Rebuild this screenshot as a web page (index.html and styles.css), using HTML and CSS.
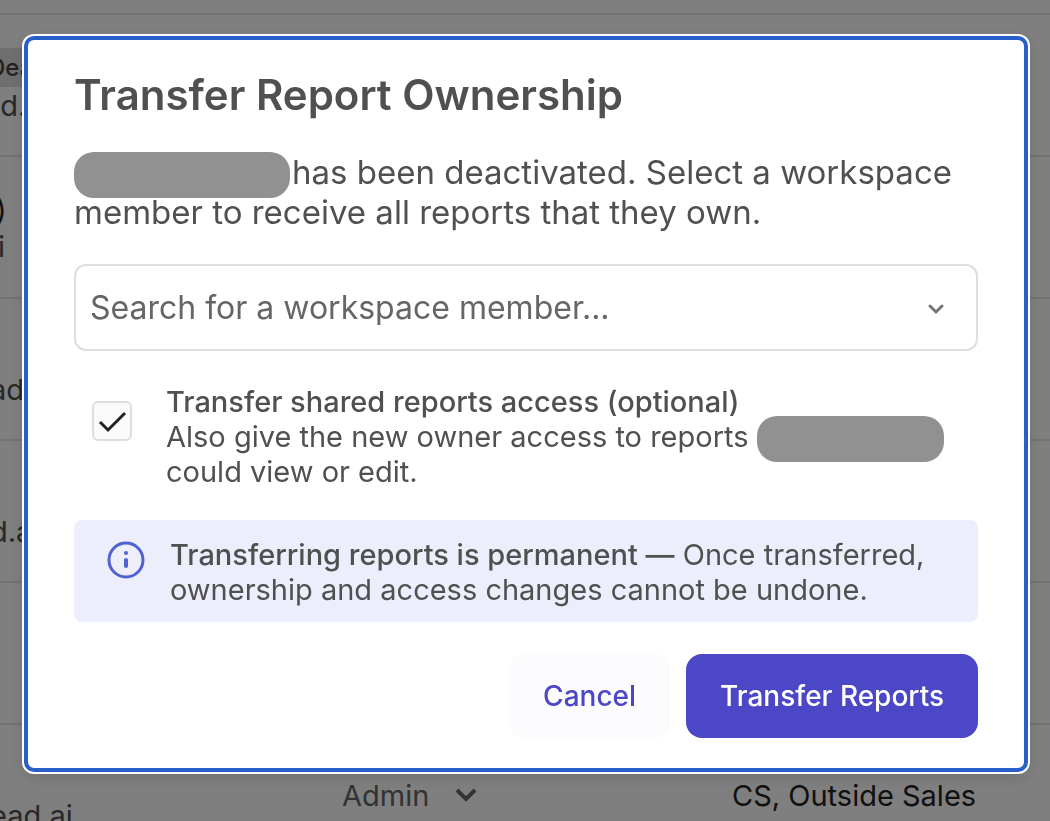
FILE: index.html
```html
<!DOCTYPE html>
<html lang="en">
<head>
    <meta charset="UTF-8">
    <meta name="viewport" content="width=device-width, initial-scale=1.0">
    <title>Transfer Report Ownership</title>
    <link rel="stylesheet" href="styles.css">
</head>
<body>
    <table class="members">
        <tbody>
            <tr class="spacer"><td colspan="3"></td></tr>
            <tr>
                <td class="member"><span class="status">Dea</span><span class="email">ad.</span></td>
                <td></td>
                <td></td>
            </tr>
            <tr>
                <td class="member"><span class="name">)</span><span class="email">i</span></td>
                <td></td>
                <td></td>
            </tr>
            <tr>
                <td class="member single"><span class="email">ad</span></td>
                <td></td>
                <td></td>
            </tr>
            <tr>
                <td class="member single"><span class="email">d.a</span></td>
                <td></td>
                <td></td>
            </tr>
            <tr>
                <td class="member"></td>
                <td></td>
                <td></td>
            </tr>
            <tr>
                <td class="member single"><span class="email">ead.ai</span></td>
                <td class="role">
                    <button class="role-btn">Admin
                        <svg width="22" height="14" viewBox="0 0 22 14" fill="none" stroke="currentColor" stroke-width="4"><path d="M2 2l9 9 9-9"/></svg>
                    </button>
                </td>
                <td class="groups">CS, Outside Sales</td>
            </tr>
        </tbody>
    </table>

    <div class="overlay">
        <div class="modal" role="dialog" aria-modal="true" aria-labelledby="modalTitle">
            <h1 id="modalTitle" class="modal-title">Transfer Report Ownership</h1>
            <p class="modal-text"><span class="redacted"></span>has been deactivated. Select a workspace member to receive all reports that they own.</p>

            <div class="select-wrap">
                <select class="member-select" aria-label="Workspace member">
                    <option>Search for a workspace member...</option>
                </select>
                <svg class="select-arrow" width="18" height="12" viewBox="0 0 18 12" fill="none" stroke="currentColor" stroke-width="3" stroke-linecap="round"><path d="M3 3l6 6 6-6"/></svg>
            </div>

            <div class="option">
                <input type="checkbox" id="shared" class="checkbox" checked>
                <label for="shared" class="option-label">
                    <strong>Transfer shared reports access (optional)</strong><br>
                    Also give the new owner access to reports <span class="redacted small"></span><br>
                    could view or edit.
                </label>
            </div>

            <div class="notice">
                <svg class="notice-icon" width="38" height="38" viewBox="0 0 38 38" fill="none" stroke="currentColor"><circle cx="19" cy="19" r="17" stroke-width="3"/><path d="M19 19v6" stroke-width="4" stroke-linecap="round"/><circle cx="19" cy="12" r="2" fill="currentColor" stroke="none"/></svg>
                <p><strong>Transferring reports is permanent —</strong> Once transferred, ownership and access changes cannot be undone.</p>
            </div>

            <div class="actions">
                <button class="btn">Cancel</button>
                <button class="btn primary">Transfer Reports</button>
            </div>
        </div>
    </div>
</body>
</html>
```
FILE: styles.css
```css
* {
    margin: 0;
    padding: 0;
    box-sizing: border-box;
}

body {
    height: 100vh;
    overflow: hidden;
    background-color: #fff;
    font-family: Inter, "Liberation Sans", sans-serif;
    font-size: 29px;
    line-height: 35px;
    color: #505050;
}

button,
select {
    font: inherit;
}

strong {
    font-weight: 500;
}

/* Members table */
.members {
    width: 100%;
    border-collapse: collapse;
    table-layout: fixed;
}

.members td {
    height: 142px;
    border-bottom: 2px solid #e6e6e6;
    white-space: nowrap;
}

.members .spacer td {
    height: 14px;
}

.members .member {
    padding-top: 2px;
}

.members .single {
    padding-top: 40px;
}

.member span {
    display: block;
    width: max-content;
    line-height: 37px;
}

.member .status {
    margin-left: -16px;
    padding: 2px 4px;
    background-color: #dedede;
    color: #444;
    font-size: 24px;
    font-weight: 500;
    line-height: 35px;
}

.member .status + .email {
    margin-left: -16px;
}

.member .name {
    margin-left: -4px;
    color: #222;
}

.member .name + .email {
    margin-left: -2px;
}

.single .email {
    margin-left: -10px;
}

.role-btn {
    display: flex;
    align-items: center;
    gap: 26px;
    margin-left: -8px;
    border: none;
    background: none;
    color: #666;
}

.groups {
    padding-left: 32px;
    color: #222;
}

/* Modal */
.overlay {
    position: fixed;
    inset: 0;
    padding: 36px 22px 0 24px;
    background-color: rgba(0, 0, 0, 0.5);
}

.modal {
    padding: 35px 46px 30px;
    border: 4px solid #285fc8;
    border-radius: 10px;
    box-shadow: 0 0 0 2px #fff, 0 4px 16px rgba(0, 0, 0, 0.15);
    background-color: #fff;
}

.modal-title {
    margin-bottom: 37px;
    font-size: 42px;
    font-weight: 600;
    line-height: 40px;
}

.modal-text {
    margin-bottom: 32px;
    font-size: 33px;
    line-height: 40px;
}

.redacted {
    display: inline-block;
    width: 216px;
    height: 46px;
    margin: -6px 2px -6px 0;
    border-radius: 20px;
    background-color: #919191;
    vertical-align: middle;
}

.redacted.small {
    width: 187px;
    margin: -8px 0;
}

.select-wrap {
    position: relative;
    margin-bottom: 33px;
}

.member-select {
    width: 100%;
    height: 87px;
    padding: 0 14px;
    border: 2px solid #dedede;
    border-radius: 12px;
    background-color: #fff;
    color: #666;
    font-size: 32px;
    appearance: none;
}

.select-arrow {
    position: absolute;
    top: 39px;
    right: 33px;
    color: #757575;
}

.option {
    display: flex;
    gap: 34px;
    padding-left: 18px;
    margin-bottom: 31px;
}

.checkbox {
    flex: none;
    width: 40px;
    height: 40px;
    margin-top: 17px;
    border: 2px solid #dedede;
    border-radius: 6px;
    background-color: #fafafa;
    appearance: none;
}

.checkbox:checked {
    background-image: url("data:image/svg+xml,%3Csvg xmlns='http://www.w3.org/2000/svg' viewBox='0 0 36 36' fill='none' stroke='%23222' stroke-width='3'%3E%3Cpath d='M6 19l8 8 17-17'/%3E%3C/svg%3E");
}

.notice {
    display: flex;
    gap: 25px;
    padding: 17px 33px 15px;
    margin-bottom: 32px;
    border-radius: 8px;
    background-color: #edeefc;
}

.notice-icon {
    flex: none;
    margin-top: 4px;
    color: #5062d2;
}

.actions {
    display: flex;
    justify-content: flex-end;
    gap: 16px;
}

.btn {
    height: 84px;
    padding: 0 34px;
    border: none;
    border-radius: 16px;
    background-color: #fcfcff;
    color: #4b47c6;
    font-size: 28px;
    font-weight: 500;
    cursor: pointer;
}

.btn.primary {
    background-color: #4b47c6;
    color: #fff;
}
```
